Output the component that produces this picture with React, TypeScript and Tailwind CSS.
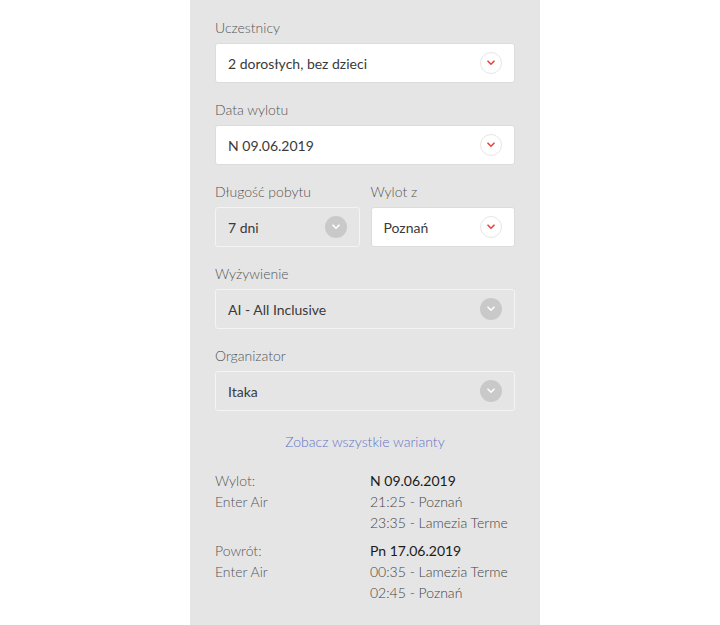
import React from 'react';

type Variant = 'active' | 'disabled';

const Chevron: React.FC<{ variant: Variant }> = ({ variant }) =>
  variant === 'active' ? (
    <span className="w-[22px] h-[22px] rounded-full bg-white border border-[#e6e6e6] flex items-center justify-center shrink-0">
      <svg width="8" height="6" viewBox="0 0 8 6">
        <path d="M1 1.2 L4 4.2 L7 1.2" fill="none" stroke="#e8413c" strokeWidth="1.6" strokeLinecap="round" />
      </svg>
    </span>
  ) : (
    <span className="w-[22px] h-[22px] rounded-full bg-[#c9c9c9] flex items-center justify-center shrink-0">
      <svg width="8" height="6" viewBox="0 0 8 6">
        <path d="M1 1.2 L4 4.2 L7 1.2" fill="none" stroke="#ffffff" strokeWidth="1.6" strokeLinecap="round" />
      </svg>
    </span>
  );

const Select: React.FC<{ label: string; value: string; variant?: Variant }> = ({ label, value, variant = 'active' }) => (
  <div className="flex flex-col">
    <label className="text-[14px] leading-[20px] text-[#555] font-light mb-[5px]">{label}</label>
    <div
      className={
        variant === 'active'
          ? 'h-[40px] rounded-[3px] bg-white border border-[#dcdcdc] flex items-center justify-between pl-[12px] pr-[12px]'
          : 'h-[40px] rounded-[3px] bg-[#e5e5e5] border border-[#f4f4f4] flex items-center justify-between pl-[12px] pr-[12px]'
      }
    >
      <span className="text-[14px] text-[#3a3a3a]">{value}</span>
      <Chevron variant={variant} />
    </div>
  </div>
);

const FlightRow: React.FC<{ title: string; carrier: string; date: string; dep: string; arr: string }> = ({
  title,
  carrier,
  date,
  dep,
  arr,
}) => (
  <div className="grid grid-cols-[155px_1fr] text-[14px] leading-[21px]">
    <div className="flex flex-col text-[#555] font-light">
      <span>{title}</span>
      <span>{carrier}</span>
    </div>
    <div className="flex flex-col text-[#5a5a5a]">
      <span className="text-[#1a1a1a]">{date}</span>
      <span className="font-light text-[#444]">{dep}</span>
      <span className="font-light text-[#444]">{arr}</span>
    </div>
  </div>
);

export default function App() {
  return (
    <div className="w-full min-h-[625px] bg-white flex justify-center" style={{ fontFamily: 'Lato, "Noto Sans", sans-serif' }}>
      <div className="w-[350px] bg-[#e5e5e5] px-[25px] pt-[18px] pb-[20px] flex flex-col gap-[17px] ml-[10px]">
        <Select label="Uczestnicy" value="2 dorosłych, bez dzieci" />
        <Select label="Data wylotu" value="N 09.06.2019" />
        <div className="grid grid-cols-2 gap-[11px]">
          <Select label="Długość pobytu" value="7 dni" variant="disabled" />
          <Select label="Wylot z" value="Poznań" />
        </div>
        <Select label="Wyżywienie" value="AI - All Inclusive" variant="disabled" />
        <Select label="Organizator" value="Itaka" variant="disabled" />
        <div className="flex flex-col mt-[4px]">
          <a className="text-center text-[14px] leading-[20px] text-[#6474c6] font-light mb-[18px] cursor-pointer">
            Zobacz wszystkie warianty
          </a>
          <div className="flex flex-col gap-[7px]">
            <FlightRow title="Wylot:" carrier="Enter Air" date="N 09.06.2019" dep="21:25 - Poznań" arr="23:35 - Lamezia Terme" />
            <FlightRow title="Powrót:" carrier="Enter Air" date="Pn 17.06.2019" dep="00:35 - Lamezia Terme" arr="02:45 - Poznań" />
          </div>
        </div>
      </div>
    </div>
  );
}
